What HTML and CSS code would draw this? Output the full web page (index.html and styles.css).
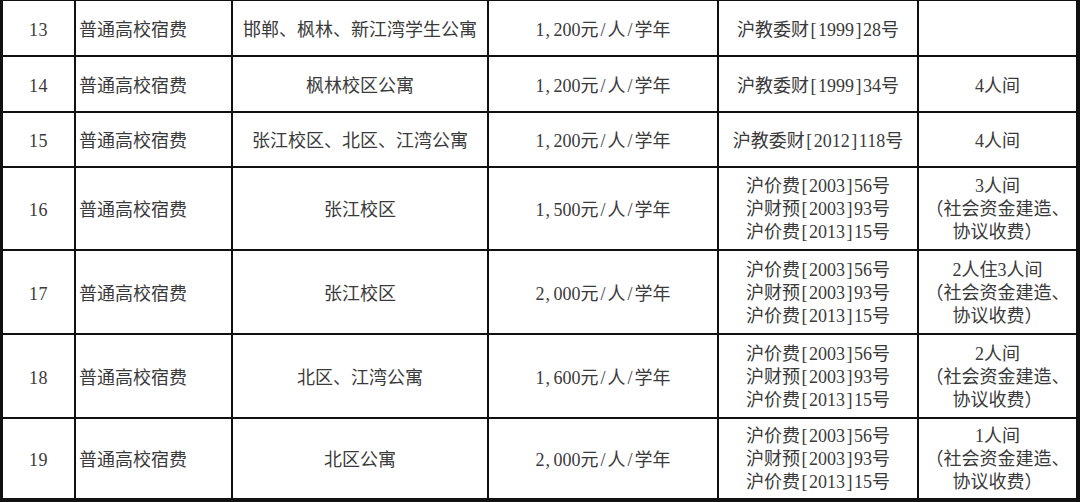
FILE: index.html
```html
<!DOCTYPE html>
<html lang="zh-CN">
<head>
<meta charset="utf-8">
<title>普通高校宿费</title>
<link rel="stylesheet" href="styles.css">
</head>
<body>
<div class="fee-table">
  <div class="cell num">13</div>
  <div class="cell name">普通高校宿费</div>
  <div class="cell">邯郸、枫林、新江湾学生公寓</div>
  <div class="cell">1<span class="cm">,</span>200元<span class="hw">/</span>人<span class="hw">/</span>学年</div>
  <div class="cell">沪教委财<span class="hw">[</span>1999<span class="hw">]</span>28号</div>
  <div class="cell"></div>

  <div class="cell num">14</div>
  <div class="cell name">普通高校宿费</div>
  <div class="cell">枫林校区公寓</div>
  <div class="cell">1<span class="cm">,</span>200元<span class="hw">/</span>人<span class="hw">/</span>学年</div>
  <div class="cell">沪教委财<span class="hw">[</span>1999<span class="hw">]</span>34号</div>
  <div class="cell">4人间</div>

  <div class="cell num">15</div>
  <div class="cell name">普通高校宿费</div>
  <div class="cell">张江校区、北区、江湾公寓</div>
  <div class="cell">1<span class="cm">,</span>200元<span class="hw">/</span>人<span class="hw">/</span>学年</div>
  <div class="cell">沪教委财<span class="hw">[</span>2012<span class="hw">]</span>118号</div>
  <div class="cell">4人间</div>

  <div class="cell num">16</div>
  <div class="cell name">普通高校宿费</div>
  <div class="cell">张江校区</div>
  <div class="cell">1<span class="cm">,</span>500元<span class="hw">/</span>人<span class="hw">/</span>学年</div>
  <div class="cell multi">
    <div class="ln">沪价费<span class="hw">[</span>2003<span class="hw">]</span>56号</div>
    <div class="ln">沪财预<span class="hw">[</span>2003<span class="hw">]</span>93号</div>
    <div class="ln">沪价费<span class="hw">[</span>2013<span class="hw">]</span>15号</div>
  </div>
  <div class="cell multi">
    <div class="ln">3人间</div>
    <div class="ln">（社会资金建造、</div>
    <div class="ln">协议收费）</div>
  </div>

  <div class="cell num">17</div>
  <div class="cell name">普通高校宿费</div>
  <div class="cell">张江校区</div>
  <div class="cell">2<span class="cm">,</span>000元<span class="hw">/</span>人<span class="hw">/</span>学年</div>
  <div class="cell multi">
    <div class="ln">沪价费<span class="hw">[</span>2003<span class="hw">]</span>56号</div>
    <div class="ln">沪财预<span class="hw">[</span>2003<span class="hw">]</span>93号</div>
    <div class="ln">沪价费<span class="hw">[</span>2013<span class="hw">]</span>15号</div>
  </div>
  <div class="cell multi">
    <div class="ln">2人住3人间</div>
    <div class="ln">（社会资金建造、</div>
    <div class="ln">协议收费）</div>
  </div>

  <div class="cell num">18</div>
  <div class="cell name">普通高校宿费</div>
  <div class="cell">北区、江湾公寓</div>
  <div class="cell">1<span class="cm">,</span>600元<span class="hw">/</span>人<span class="hw">/</span>学年</div>
  <div class="cell multi">
    <div class="ln">沪价费<span class="hw">[</span>2003<span class="hw">]</span>56号</div>
    <div class="ln">沪财预<span class="hw">[</span>2003<span class="hw">]</span>93号</div>
    <div class="ln">沪价费<span class="hw">[</span>2013<span class="hw">]</span>15号</div>
  </div>
  <div class="cell multi">
    <div class="ln">2人间</div>
    <div class="ln">（社会资金建造、</div>
    <div class="ln">协议收费）</div>
  </div>

  <div class="cell num">19</div>
  <div class="cell name">普通高校宿费</div>
  <div class="cell">北区公寓</div>
  <div class="cell">2<span class="cm">,</span>000元<span class="hw">/</span>人<span class="hw">/</span>学年</div>
  <div class="cell multi">
    <div class="ln">沪价费<span class="hw">[</span>2003<span class="hw">]</span>56号</div>
    <div class="ln">沪财预<span class="hw">[</span>2003<span class="hw">]</span>93号</div>
    <div class="ln">沪价费<span class="hw">[</span>2013<span class="hw">]</span>15号</div>
  </div>
  <div class="cell multi">
    <div class="ln">1人间</div>
    <div class="ln">（社会资金建造、</div>
    <div class="ln">协议收费）</div>
  </div>
</div>
</body>
</html>
```

FILE: styles.css
```css
html, body {
  margin: 0;
  padding: 0;
  background: #ffffff;
}

.fee-table {
  width: 1080px;
  height: 502px;
  box-sizing: border-box;
  display: grid;
  grid-template-columns: 71px 155px 254px 228px 198px 157px;
  grid-template-rows: 54px 54px 53px 81px 82px 82px 79px;
  gap: 2px;
  padding: 1px 4px 4px 3px;
  background: #111111;
  font-family: "Liberation Serif", "Noto Sans CJK SC", serif;
  font-size: 18px;
  color: #3a3a3a;
}

.cell {
  background: #ffffff;
  display: flex;
  align-items: center;
  justify-content: center;
  text-align: center;
  line-height: 22px;
  white-space: nowrap;
  padding-top: 3px;
  box-sizing: border-box;
}

.cell.num {
  letter-spacing: 0.5px;
}

.cell.name {
  justify-content: flex-start;
  padding-left: 3px;
}

.cell.multi {
  flex-direction: column;
  line-height: 23px;
  padding-top: 2px;
}

.ln {
  white-space: nowrap;
}

.hw {
  display: inline-block;
  width: 9px;
  text-align: center;
}

.cm {
  display: inline-block;
  width: 9px;
  text-align: left;
  padding-left: 1px;
  box-sizing: border-box;
}
```
